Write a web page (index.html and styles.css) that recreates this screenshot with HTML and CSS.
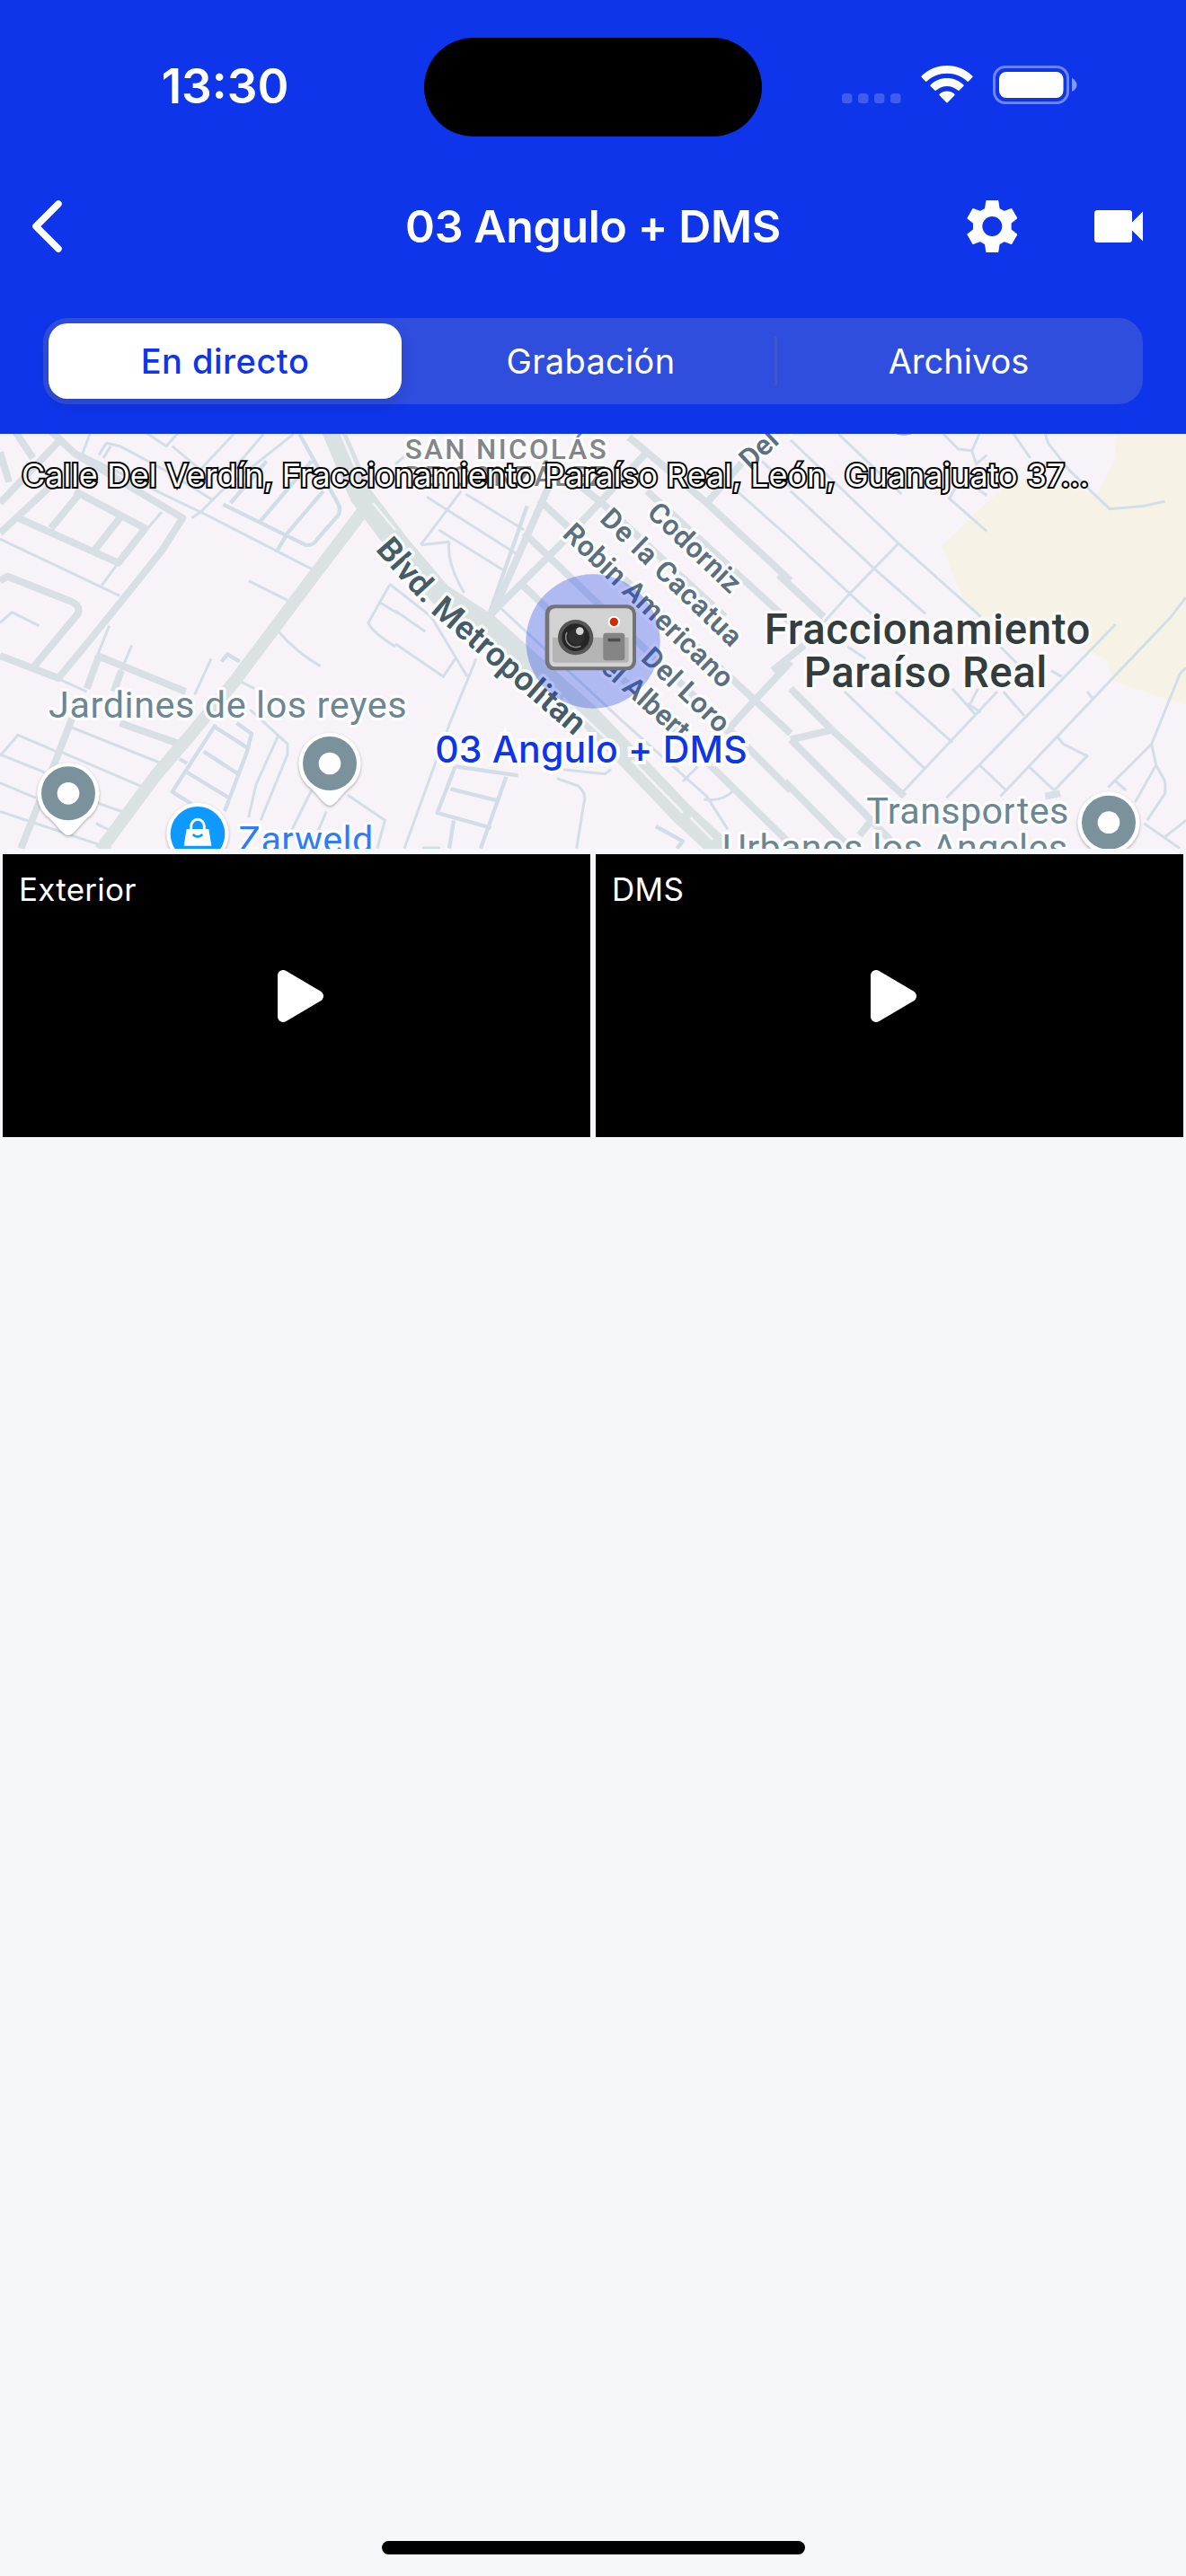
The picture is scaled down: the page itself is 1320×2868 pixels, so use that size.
FILE: index.html
```html
<!DOCTYPE html>
<html lang="es">
<head>
<meta charset="utf-8">
<title>03 Angulo + DMS</title>
<link rel="stylesheet" href="styles.css">
</head>
<body>
<header class="header">
  <div class="status">
    <div class="status-time"><span class="time">13:30</span></div>
    <div class="island"></div>
    <div class="status-icons">
      <svg class="cell" viewBox="0 0 66 12"><g fill="#fff" fill-opacity=".2"><rect width="11.500" height="11" rx="3.500"/><rect x="18" width="11.500" height="11" rx="3.500"/><rect x="36" width="11.500" height="11" rx="3.500"/><rect x="54" width="11.500" height="11" rx="3.500"/></g></svg>
      <svg class="wifi" viewBox="0 0 58 42" fill="#fff"><path d="M29 0C40 0 50 4.300 57.300 11.500Q58 12.300 57.300 13.100L53 17.600Q52.200 18.200 51.500 17.500C45.500 11.900 37.500 8.700 29 8.700S12.500 11.900 6.500 17.500Q5.800 18.200 5 17.600L.7 13.100Q0 12.300.7 11.500C8 4.300 18 0 29 0Z"/><path d="M29 14C36 14 42.500 16.700 47.300 21.300Q48.100 22.200 47.300 23L42.700 27.500Q41.900 28.300 41 27.500C37.800 24.600 33.600 22.900 29 22.900S20.200 24.600 17 27.500Q16.100 28.300 15.300 27.500L10.700 23Q9.900 22.200 10.700 21.300C15.500 16.700 22 14 29 14Z"/><path d="M29 28.500C32.200 28.500 35 29.600 37.200 31.500Q38.200 32.400 37.300 33.300L29.800 41Q29 41.800 28.200 41L20.700 33.300Q19.800 32.400 20.800 31.500C23 29.600 25.800 28.500 29 28.500Z"/></svg>
      <svg class="battery" viewBox="0 0 94 43" fill="#fff"><rect x="1.500" y="1.500" width="82" height="40" rx="12.500" fill="none" stroke="#fff" stroke-opacity=".4" stroke-width="3"/><rect x="7" y="7" width="71.500" height="29" rx="8"/><path d="M88 14Q93.500 17 93.500 21.500T88 29Z" fill-opacity=".5"/></svg>
    </div>
  </div>
  <nav class="nav">
    <svg class="back" viewBox="0 0 36 60"><path d="M31 5 6 30 31 55" fill="none" stroke="#fff" stroke-width="7.500" stroke-linecap="round" stroke-linejoin="round"/></svg>
    <h1 class="title">03 Angulo + DMS</h1>
    <div class="actions">
      <svg class="gear" viewBox="47 39 169 174"><path fill="#fff" fill-rule="evenodd" stroke="#fff" stroke-width="4" stroke-linejoin="round" d="M113 41H151L155 68 172 77 196 68 214 99 194 115V137L214 153 196 184 172 175 155 185 151 211H113L109 185 92 175 68 184 50 153 70 137V115L50 99 68 68 92 77 109 68ZM132 91A35 35 0 1 0 132 161 35 35 0 1 0 132 91Z"/></svg>
      <svg class="videocam" viewBox="0 0 24 24" fill="#fff"><path d="M17 10.500V7c0-.550-.450-1-1-1H4c-.550 0-1 .450-1 1v10c0 .550.450 1 1 1h12c.550 0 1-.450 1-1v-3.500l4 4v-11z"/></svg>
    </div>
  </nav>
  <div class="segments">
    <div class="segment active">En directo</div>
    <div class="segment recording">Grabación</div>
    <i class="divider"></i>
    <div class="segment">Archivos</div>
  </div>
</header>

<section class="map">
  <svg class="map-canvas" viewBox="0 9 3960 1386">
    <path class="park" d="M3730 0 3720 100 3665 210 3570 190 3480 170 3390 155 3260 270 3145 385 3210 550 3275 620 3640 640 3610 725 3700 765 3715 835 3960 915V0Z"/>
    <!-- west -->
    <g class="thin">
      <path d="M0 360 400 550M540 270 480 340M395 440 340 515M270 75 440 160 700 285M300 10 275 75M330 80 355 40 400 50 550 130 710 230M370 50 345 90M480 0 555 50 600 0M575 50 670 130M780 10 640 160M880 10 760 150M640 290 670 270 740 200 980 10M670 270 1040 460"/>
      <path d="M830 500 960 565M930 670Q990 740 1070 785M705 760 650 880M800 835 850 860M440 715 400 810M365 650 325 750M0 640 40 605 130 650M200 830 290 870"/>
      <path d="M240 990 540 1110M200 1070 480 1190M0 1085 60 1015 200 1075M0 1080 150 1140M0 1175 120 1225M320 1240 420 1275M0 1270 370 1394M320 1310 370 1335"/>
      <path d="M835 930 960 1045V1080L870 1300M930 1015 855 1180 830 1290M1040 1200 975 1330M1090 1270 1060 1340M1160 1215 1285 1300 1260 1394M1300 515 1230 640Q1240 670 1320 720M1265 570 1330 610"/>
    </g>
    <g class="lane">
      <path d="M745 245 1020 380Q1045 385 1060 360L1130 280Q1140 255 1125 235L1000 10M770 240 890 100M870 300 1040 100M925 400 960 340 1080 200M740 770 760 745 800 770"/>
      <path d="M720 980 575 1205 640 1245M720 990 830 1060M680 1070 795 1145M625 1140 765 1225M790 975 840 1010 825 1070 750 1270M600 1095 625 1110"/>
    </g>
    <g class="street">
      <path d="M170 0 250 75 610 290 540 400 420 550 290 710 195 825 0 750M50 0 110 90M195 35 0 240M0 70 30 170M0 340 200 155M250 200 485 325 395 440 60 290M260 215 170 325M400 290 310 405"/>
      <path d="M0 500 25 485 240 570Q270 585 260 610L110 790M330 750 290 860M325 750 620 870M405 800 380 870M240 960 190 1090 70 1394M400 975 600 1045"/>
    </g>
    <path class="avenue" d="M1225 250 1050 480 930 640 780 840 640 1010 520 1150 335 1400"/>
    <!-- centre -->
    <g transform="translate(1320 0)">
      <g class="thin">
        <path d="M220 200 85 380M105 220 405 410M235 210 430 330M145 330 370 470M180 370Q170 440 230 540M-20 510 120 620 240 820M0 600 100 670M0 710 160 820 200 760M270 760 180 980 30 1394M-60 150-110 200M60 60 0 110"/>
        <path d="M540 1160 610 1185Q640 1210 630 1240L605 1394M560 1130 700 1145 720 1130M1140 200 1320 360M340 580 760 970 1040 1220 1110 1330M1030 1230Q1090 1240 1130 1200M960 1170 1010 1120M180 370 85 380M1180 60 1320 190"/>
      </g>
      <g class="lane"><path d="M200 1120 140 1275 320 1325M200 1120 410 1150M370 1155 285 1394M185 1195 345 1235M195 1300 180 1394M870 1320 960 1370 940 1394M90 1394H150M440 250 310 620M340 600 460 460"/></g>
      <g class="street">
        <path d="M510 190 400 440 310 640M310 620 550 380 700 220 840 70M480 230 900 620 1320 1010M430 340 1180 1060 1320 1200M420 510 760 830 1320 1380M600 170 690 240 1100 620M780 20 840 70 1040 240 1320 500M840 200 1320 640M1040 240 1180 80M1320 770 1190 910 1100 1010"/>
      </g>
      <path class="boulevard" d="M-215-20-115 215 10 380 150 545 310 650 640 945 960 1280 1090 1400"/>
      <path class="median" d="M-185 0-130 130M-75 240 0 330M560 890 740 1060M790 1100 960 1275M985 1290 1060 1365"/>
    </g>
    <!-- east -->
    <g transform="translate(2640 0)">
      <g class="thin">
        <path d="M0 30 360 375 635 620M160 10 370 210M0 200 280 460 450 610M0 360 270 610M360 375 190 550 110 640M180 870 450 1130M350 870 540 1040M540 860 620 950M700 720 760 780M710 870 780 950M690 870 370 1210M1085 645 630 1115 520 1225M1320 555 1270 620 700 1220M630 1115 720 1200M795 1120 880 1200M890 1020 910 1045 990 1085 880 1200M990 870 1010 895M870 800 905 820M190 720 250 760M600 910 625 860M590 910 635 940"/>
        <path d="M510 10 560 60 605 65 630 10M605 65 620 110 655 80M850 10 860 40 930 130 1065 260 1180 250 1250 235M745 10 800 90M620 190 655 215M550 190 530 225 655 335"/>
        <path d="M1320 790 1300 810 1205 1045 1060 1190M1205 1045 1220 1115 1250 1170V1210L1190 1300M1220 1115 1150 1240M1180 1310 1300 1394M1250 1355 1320 1300M1080 1165 1120 1200"/>
      </g>
      <g class="street"><path d="M-40 480 110 620M-60 800 45 715M0 860 140 1000 380 1220M0 1030 130 1000M0 1030 240 1270 360 1394M-20 1170 200 1394M230 1350 270 1300M850 1220 900 1210"/></g>
      <ellipse cx="378" cy="6" rx="28" ry="8" fill="#a6adb8"/>
    </g>

    <g class="place">
      <text x="162" y="958" textLength="1196">Jardines de los reyes</text>
      <text x="2893" y="1310" textLength="675">Transportes</text>
      <text x="2412" y="1434" textLength="1152">Urbanos los Angeles</text>
    </g>
    <text class="shop" x="796" y="1407" textLength="450">Zarweld</text>
    <g class="district">
      <text x="2552" y="710" textLength="1088">Fraccionamiento</text>
      <text x="2684" y="855" textLength="812">Paraíso Real</text>
    </g>
    <g class="colony">
      <text x="1352" y="92" textLength="672">SAN NICOLÁS</text>
      <text x="1352" y="182" textLength="672">DE GONZÁLEZ</text>
    </g>
    <g class="road-name" transform="translate(1320 0)">
      <text transform="translate(1185 132) rotate(-43)">Del Verdín</text>
      <text transform="translate(836 278) rotate(43.500)" textLength="389">Codorniz</text>
      <text transform="translate(679 298) rotate(44)" textLength="614">De la Cacatua</text>
      <text transform="translate(554 348) rotate(43.700)" textLength="745">Robin Americano</text>
      <text transform="translate(816 763) rotate(43.300)" textLength="364">Del Loro</text>
      <text transform="translate(634 754) rotate(42)">Del Albert</text>
      <path id="blvd" d="M-68 396Q30 510 140 625L700 1108" fill="none" stroke="none"/>
      <text class="blvd-name"><textPath href="#blvd">Blvd. Metropolitan</textPath></text>
    </g>

    <defs>
      <g id="pin">
        <path class="pin-shape" d="M0 140C-22 140-34 104-76 72A104 104 0 1 1 76 72C34 104 22 140 0 140Z"/>
        <circle r="90" fill="#7b919c"/><circle r="37" fill="#fff"/>
      </g>
    </defs>
    <use href="#pin" x="228" y="1210"/>
    <use href="#pin" x="1101" y="1110"/>
    <use href="#pin" x="3702" y="1307"/>
    <g transform="translate(660 1345)">
      <circle class="pin-shape" r="104"/><circle r="91" fill="#0d99ff"/>
      <path d="M-37-16H37L46 40H-46Z" fill="#fff"/>
      <path d="M-22-14V-26A22 22 0 0 1 22-26V-14" fill="none" stroke="#fff" stroke-width="9"/>
      <path d="M-16 2Q0 18 16 2" fill="none" stroke="#0d99ff" stroke-width="8"/>
    </g>

    <!-- device marker -->
    <g transform="translate(1320 0)">
      <circle cx="660" cy="702" r="224" fill="#0f35e8" fill-opacity=".3"/>
      <rect x="500" y="580" width="304" height="219" rx="30" fill="#737373"/>
      <rect x="514" y="592" width="278" height="195" rx="20" fill="#d2d2d2"/>
      <path d="M525 689H779V764Q779 773 770 773H534Q525 773 525 764Z" fill="#b4b4b4"/>
      <circle cx="602" cy="689" r="59" fill="#555"/><circle cx="602" cy="689" r="46" fill="#262626"/>
      <path d="M573 672A34 34 0 0 0 619 718" fill="none" stroke="#888" stroke-width="5"/>
      <circle cx="604" cy="686" r="27" fill="#303030"/><circle cx="616" cy="668" r="13" fill="#d6d6d6"/>
      <circle cx="730" cy="637" r="20" fill="#fff"/><circle cx="730" cy="637" r="14" fill="#cf2a00"/>
      <rect x="694" y="674" width="72" height="92" rx="10" fill="#858585"/><rect x="710" y="692" width="41" height="11" rx="2" fill="#4c4c4c"/>
    </g>
  </svg>
  <p class="address">Calle Del Verdín, Fraccionamiento Paraíso Real, León, Guanajuato 37...</p>
  <p class="marker-name">03 Angulo + DMS</p>
</section>

<main class="cameras">
  <article class="camera"><h2 class="camera-name">Exterior</h2>
    <svg class="play" viewBox="0 0 51 58"><path d="M6 6V52L45 29Z" fill="#fff" stroke="#fff" stroke-width="12" stroke-linejoin="round"/></svg></article>
  <article class="camera"><h2 class="camera-name">DMS</h2>
    <svg class="play" viewBox="0 0 51 58"><path d="M6 6V52L45 29Z" fill="#fff" stroke="#fff" stroke-width="12" stroke-linejoin="round"/></svg></article>
</main>
<footer class="home"><div class="home-bar"></div></footer>
</body>
</html>
```
FILE: styles.css
```css
* { box-sizing: border-box; margin: 0; padding: 0; }
body {
  width: 1320px;
  height: 2868px;
  display: flex;
  flex-direction: column;
  background: #f5f7fa;
  color: #fff;
  font-family: Inter, "Liberation Sans", sans-serif;
}
svg { display: block; flex: none; }

/* header */
.header { height: 483px; background: #0e35e9; }
.status { display: grid; grid-template-columns: 1fr 376px 1fr; height: 162px; padding-top: 42px; }
.status-time { display: flex; justify-content: center; padding: 22px 0 0 29px; }
.time { font-size: 53px; font-weight: 600; line-height: 64px; }
.island { height: 110px; border-radius: 55px; background: #000; }
.status-icons { display: flex; align-items: flex-start; padding: 31px 0 0 89px; }
.cell { width: 66px; height: 12px; margin: 31px 22px 0 0; }
.wifi { width: 58px; height: 42px; margin-right: 22px; }
.battery { width: 94px; height: 43px; }
.nav { display: grid; grid-template-columns: 1fr auto 1fr; align-items: center; height: 180px; padding: 0 39px; }
.back { width: 36px; height: 60px; margin-left: -5px; }
.title { font-size: 50px; font-weight: 600; line-height: 60px; letter-spacing: -.36px; white-space: nowrap; }
.actions { display: flex; justify-content: flex-end; align-items: center; gap: 77px; }
.gear { width: 56.3px; height: 58px; }
.videocam { width: 72px; height: 72px; }
.segments { display: flex; align-items: center; height: 96px; margin: 12px 48px 0; padding: 6px 3px 6px 6px; border-radius: 27px; background: #2f4edd; }
.segment { flex: 1; height: 84px; display: flex; align-items: center; justify-content: center; font-size: 38px; }
.segment.active { flex: none; width: 393px; margin-right: 6px; border-radius: 21px; background: #fff; color: #0e35e9; font-weight: 500; letter-spacing: .5px; box-shadow: 0 6px 16px rgba(0, 0, 0, .12); }
.segment.recording { flex: none; width: 409px; letter-spacing: .3px; }
.divider { width: 3px; height: 54px; background: #3f57ce; }

/* map */
.map { position: relative; height: 462px; overflow: hidden; background: #f7f3f8; }
.map-canvas { width: 1320px; height: 462px; font-family: Roboto, sans-serif; }
.map-canvas path { stroke-linejoin: round; }
.park { fill: #f6f3e6; }
.thin { fill: none; stroke: #d2dfe9; stroke-width: 9; }
.lane { fill: none; stroke: #d2dee7; stroke-width: 13; }
.street { fill: none; stroke: #d8e0e6; stroke-width: 24; }
.avenue { fill: none; stroke: #dbe2e4; stroke-width: 42; }
.boulevard { fill: none; stroke: #dae1e3; stroke-width: 76; }
.median { fill: none; stroke: #f3f2f6; stroke-width: 8; }
.map-canvas text { paint-order: stroke; stroke: #fff; stroke-opacity: .85; stroke-width: 20px; stroke-linejoin: round; }
.place { font-size: 124px; fill: #6c8793; }
.shop { font-size: 124px; fill: #2f7df6; }
.district { font-size: 142px; font-weight: 500; fill: #333d40; }
.colony { font-size: 94px; font-weight: 500; fill: #83858b; }
.road-name { font-size: 95px; font-weight: 600; fill: #5c6f80; }
.blvd-name { font-size: 111px; fill: #455b67; }
.pin-shape { fill: #fff; filter: drop-shadow(0 4px 4px rgba(0, 0, 0, .3)); }
.address { position: absolute; left: 24px; top: 24px; font-size: 36px; line-height: 44px; letter-spacing: -.03px; white-space: nowrap; -webkit-text-stroke: 4px #000; paint-order: stroke; }
.marker-name { position: absolute; left: 0; width: 100%; top: 326px; padding-right: 4px; text-align: center; font-size: 41px; font-weight: 500; line-height: 50px; letter-spacing: .2px; color: #0e35e9; -webkit-text-stroke: 8px #fff; paint-order: stroke; }

/* cameras */
.cameras { display: flex; gap: 6px; padding: 6px 3px 0; }
.camera { flex: 1; height: 315px; display: grid; place-items: center; background: #000; }
.camera > * { grid-area: 1 / 1; }
.camera-name { place-self: start; padding: 17px 0 0 18px; font-size: 35px; font-weight: 400; line-height: 44px; letter-spacing: .25px; }
.play { width: 51px; height: 58px; margin-left: 9px; }
.home { margin-top: auto; display: flex; justify-content: center; padding-bottom: 24px; }
.home-bar { width: 471px; height: 15px; border-radius: 8px; background: #000; }
```
